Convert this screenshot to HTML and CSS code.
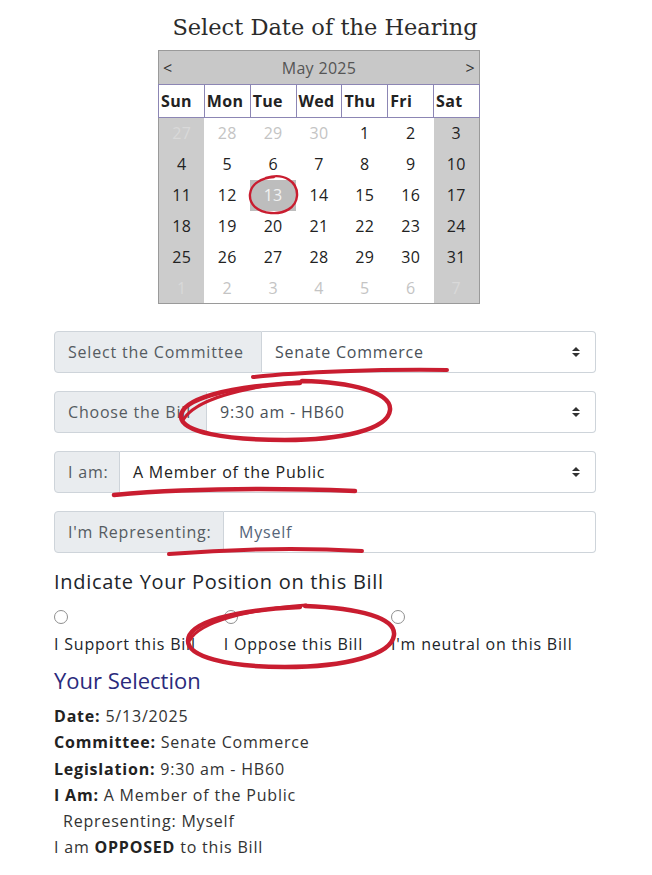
FILE: index.html
```html
<!DOCTYPE html>
<html>
<head>
<meta charset="utf-8">
<title>Select Date of the Hearing</title>
<link rel="stylesheet" href="styles.css">
</head>
<body>
<div class="page">
  <h2 class="title">Select Date of the Hearing</h2>
  <div class="cal-wrap">
    <table class="cal">
      <thead>
        <tr class="cal-head">
          <th colspan="7">
            <div class="cal-nav"><span class="nav">&lt;</span><span class="month">May 2025</span><span class="nav">&gt;</span></div>
          </th>
        </tr>
        <tr class="dow">
          <th>Sun</th><th>Mon</th><th>Tue</th><th>Wed</th><th>Thu</th><th>Fri</th><th>Sat</th>
        </tr>
      </thead>
      <tbody>
        <tr><td class="we other">27</td><td class="other">28</td><td class="other">29</td><td class="other">30</td><td>1</td><td>2</td><td class="we">3</td></tr>
        <tr><td class="we">4</td><td>5</td><td>6</td><td>7</td><td>8</td><td>9</td><td class="we">10</td></tr>
        <tr><td class="we">11</td><td>12</td><td class="selected">13</td><td>14</td><td>15</td><td>16</td><td class="we">17</td></tr>
        <tr><td class="we">18</td><td>19</td><td>20</td><td>21</td><td>22</td><td>23</td><td class="we">24</td></tr>
        <tr><td class="we">25</td><td>26</td><td>27</td><td>28</td><td>29</td><td>30</td><td class="we">31</td></tr>
        <tr><td class="we other">1</td><td class="other">2</td><td class="other">3</td><td class="other">4</td><td class="other">5</td><td class="other">6</td><td class="we other">7</td></tr>
      </tbody>
    </table>
  </div>

  <div class="form">
    <div class="ig">
      <span class="addon addon-committee">Select the Committee</span>
      <div class="field select">Senate Commerce<svg class="caret" width="8" height="10" viewBox="0 0 8 10"><polygon points="0,4 4,0 8,4" /><polygon points="0,6 4,10 8,6" /></svg></div>
    </div>
    <div class="ig">
      <span class="addon addon-bill">Choose the Bill</span>
      <div class="field select">9:30 am - HB60<svg class="caret" width="8" height="10" viewBox="0 0 8 10"><polygon points="0,4 4,0 8,4" /><polygon points="0,6 4,10 8,6" /></svg></div>
    </div>
    <div class="ig">
      <span class="addon addon-iam">I am:</span>
      <div class="field select dark">A Member of the Public<svg class="caret" width="8" height="10" viewBox="0 0 8 10"><polygon points="0,4 4,0 8,4" /><polygon points="0,6 4,10 8,6" /></svg></div>
    </div>
    <div class="ig">
      <span class="addon addon-rep">I'm Representing:</span>
      <div class="field input">Myself</div>
    </div>
  </div>

  <h4 class="pos-title">Indicate Your Position on this Bill</h4>
  <div class="radios">
    <div class="opt"><span class="radio"></span><span class="opt-label">I Support this Bill</span></div>
    <div class="opt"><span class="radio"></span><span class="opt-label">I Oppose this Bill</span></div>
    <div class="opt"><span class="radio"></span><span class="opt-label">I'm neutral on this Bill</span></div>
  </div>

  <h3 class="sel-title">Your Selection</h3>
  <div class="summary">
    <div class="line"><b>Date:</b> 5/13/2025</div>
    <div class="line"><b>Committee:</b> Senate Commerce</div>
    <div class="line"><b>Legislation:</b> 9:30 am - HB60</div>
    <div class="line"><b>I Am:</b> A Member of the Public</div>
    <div class="line indent">Representing: Myself</div>
    <div class="line">I am <b>OPPOSED</b> to this Bill</div>
  </div>

  <svg class="marks" width="652" height="875" viewBox="0 0 652 875">
    <g fill="none" stroke="#c91d30" stroke-linecap="round" stroke-linejoin="round">
      <path stroke-width="2.4" d="M266,178 C284,172 298,182 297,196 C296,208 284,214 271,213 C257,212 249,204 250,194 C251,184 261,178 274,177" />
      <path stroke-width="4" d="M253,377 C300,372 380,369 447,370" />
      <path stroke-width="4.5" d="M302,381 C350,382 392,392 390,410 C388,430 340,440 285,440 C225,440 182,432 181,417 C180,400 225,386 300,383" />
      <path stroke-width="3" d="M183,420 C195,400 240,387 306,381" />
      <path stroke-width="4.5" d="M114,495 C170,490 250,487 355,491" />
      <path stroke-width="4" d="M169,554 C220,550 290,547 362,551" />
      <path stroke-width="4.5" d="M305,606 C360,608 396,618 394,635 C392,655 345,667 285,667 C225,667 188,656 188,641 C188,622 235,610 300,607" />
      <path stroke-width="3" d="M190,640 C200,622 245,610 306,605" />
    </g>
  </svg>
</div>
</body>
</html>
```

FILE: styles.css
```css
* { box-sizing: border-box; }

html, body {
  margin: 0;
  padding: 0;
  background: #ffffff;
}

body {
  font-family: "Open Sans", "Liberation Sans", sans-serif;
  color: #212529;
  font-size: 16px;
  letter-spacing: 0.05em;
}

.page {
  position: relative;
  width: 652px;
  height: 875px;
  overflow: hidden;
  padding: 0 56px 0 54px;
}

.title {
  margin: 11px 0 0 0;
  font-family: "DejaVu Serif", "Liberation Serif", serif;
  font-weight: 400;
  font-size: 22.5px;
  line-height: 32px;
  letter-spacing: 0;
  color: #2b2b2b;
  text-align: center;
}

.cal-wrap {
  display: flex;
  justify-content: center;
  padding-right: 12px;
  margin-top: 7px;
}

.cal {
  width: 322px;
  border-collapse: collapse;
  table-layout: fixed;
  border: 1px solid #9a9a9a;
  letter-spacing: 0.02em;
}

.cal-head th {
  background: #c8c8c8;
  height: 34px;
  padding: 0;
  font-weight: 400;
}

.cal-nav {
  display: flex;
  justify-content: space-between;
  align-items: center;
  padding: 0 4px 0 4px;
  color: #333;
}

.month {
  color: #555;
}

.dow th {
  height: 33px;
  border: 1px solid #8c86b4;
  background: #fff;
  text-align: left;
  padding: 0 0 0 2px;
  font-weight: 700;
  font-size: 16px;
  color: #222;
}

.cal td {
  height: 31px;
  padding: 0;
  text-align: center;
  color: #222;
  font-size: 16px;
}

.cal td.we { background: #cccccc; }
.cal td.other { color: #c4c4c4; }
.cal td.we.other { color: #d9d9d9; }
.cal td.selected { background: #bdbdbd; color: #f2f2f2; }

.form {
  margin-top: 27px;
  display: flex;
  flex-direction: column;
  gap: 18px;
}

.ig {
  display: flex;
  height: 42px;
}

.addon {
  display: flex;
  align-items: center;
  padding: 0 13px;
  background: #e9ecef;
  border: 1px solid #ced4da;
  border-radius: 4px 0 0 4px;
  color: #555b61;
  white-space: nowrap;
  overflow: hidden;
}

.addon-committee { width: 208px; }
.addon-bill { width: 153px; }
.addon-iam { width: 66px; }
.addon-rep { width: 170px; }

.field {
  flex: 1;
  display: flex;
  align-items: center;
  justify-content: space-between;
  padding: 0 15px 0 13px;
  border: 1px solid #ced4da;
  border-left: none;
  border-radius: 0 4px 4px 0;
  color: #495057;
}

.field.dark { color: #222; }
.field.input { color: #56657a; padding-left: 15px; }

.caret { fill: #333; }

.pos-title {
  margin: 15px 0 0 0;
  font-size: 20px;
  line-height: 28px;
  font-weight: 400;
  letter-spacing: 0.035em;
  color: #212529;
}

.radios {
  display: flex;
  gap: 28px;
  margin-top: 14px;
}

.opt {
  display: flex;
  flex-direction: column;
  align-items: flex-start;
}

.radio {
  width: 14px;
  height: 14px;
  border: 1px solid #8f8f8f;
  border-radius: 50%;
  background: #fff;
}

.opt-label {
  margin-top: 8px;
  line-height: 24px;
  color: #212529;
}

.sel-title {
  margin: 10px 0 0 0;
  font-size: 22px;
  line-height: 28px;
  font-weight: 400;
  letter-spacing: 0;
  color: #2a2a7c;
}

.summary {
  margin-top: 9px;
}

.line {
  line-height: 26.3px;
  color: #333;
}

.line b { color: #222; font-weight: 700; }

.line.indent { padding-left: 9px; }

.marks {
  position: absolute;
  left: 0;
  top: 0;
  pointer-events: none;
}
```
